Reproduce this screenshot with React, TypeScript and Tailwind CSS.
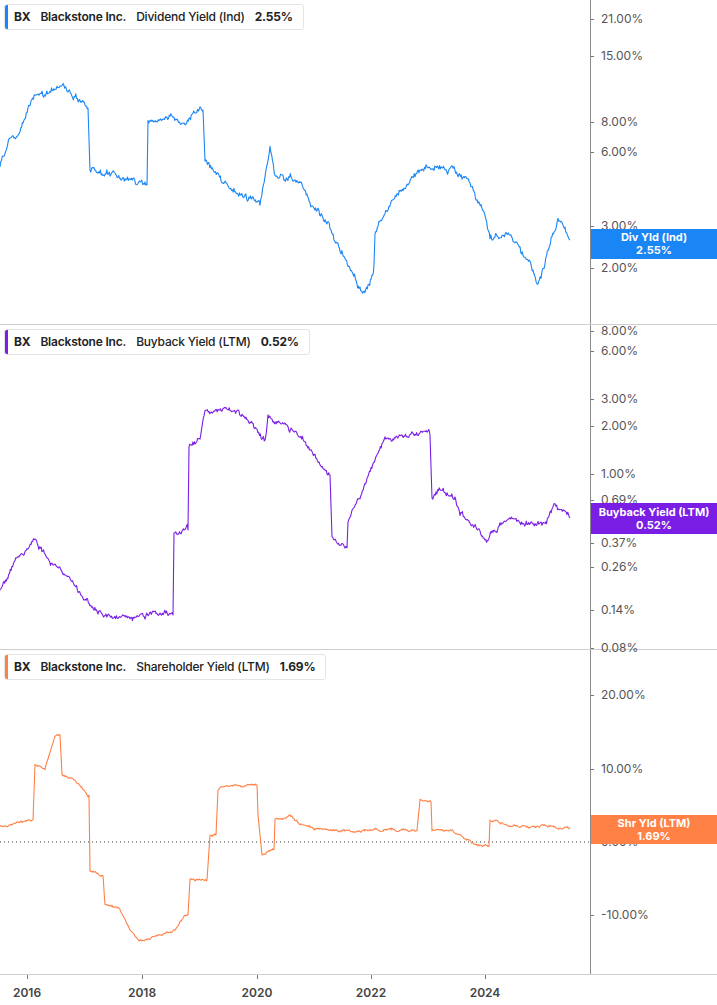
import React from 'react';

type Pt = [number, number];

// deterministic noisy line through keypoints
function noisy(keys: Pt[], amp: number, seed: number): string {
  let s = seed;
  const rnd = () => {
    s = (s * 9301 + 49297) % 233280;
    return s / 233280 - 0.5;
  };
  const out: string[] = [];
  let walk = 0;
  for (let i = 0; i < keys.length - 1; i++) {
    const [x0, y0] = keys[i];
    const [x1, y1] = keys[i + 1];
    const jump = Math.abs(y1 - y0) > 30 && x1 - x0 < 5;
    const steps = jump ? 1 : Math.max(1, Math.round((x1 - x0) / 0.8));
    for (let k = 0; k < steps; k++) {
      const t = k / steps;
      walk = walk * 0.85 + rnd() * amp;
      const y = y0 + (y1 - y0) * t + (jump ? 0 : walk + rnd() * amp * 0.8);
      out.push(`${(x0 + (x1 - x0) * t).toFixed(1)},${y.toFixed(1)}`);
    }
  }
  const l = keys[keys.length - 1];
  out.push(`${l[0]},${l[1]}`);
  return out.join(' ');
}

const divKeys: Pt[] = [[0,165],[10,140],[20,130],[35,90],[50,95],[60,85],[75,95],[85,105],[88,108],[90,170],[110,175],[145,185],[147,185],[148,120],[170,115],[185,125],[200,105],[203,110],[205,160],[230,190],[260,205],[265,180],[270,145],[275,175],[300,180],[310,200],[330,230],[345,260],[360,290],[365,295],[372,275],[374,265],[375,230],[385,210],[400,190],[415,175],[430,165],[450,170],[470,180],[485,215],[490,240],[510,235],[520,245],[530,265],[537,285],[545,265],[552,235],[558,220],[565,230],[570,240]];
const buyKeys: Pt[] = [[0,265],[15,235],[35,215],[45,230],[60,245],[75,265],[90,280],[110,290],[130,293],[160,287],[173,290],[174,210],[185,205],[188,205],[189,125],[200,115],[205,87],[230,85],[250,95],[265,115],[268,90],[285,100],[300,110],[315,130],[328,150],[330,150],[332,210],[345,220],[347,220],[348,195],[360,170],[375,135],[385,115],[400,110],[415,110],[428,110],[430,110],[432,175],[440,165],[455,175],[460,190],[480,205],[485,215],[500,200],[520,195],[535,200],[545,195],[555,180],[560,185],[570,193]];
const shrKeys: Pt[] = [[0,175],[30,170],[33,170],[35,115],[45,120],[55,85],[60,85],[62,125],[75,130],[88,145],[89,145],[90,220],[100,225],[103,225],[105,255],[120,260],[130,280],[140,290],[150,288],[175,280],[185,265],[188,265],[190,230],[205,230],[207,230],[210,185],[216,185],[218,140],[230,135],[245,135],[257,135],[258,165],[262,205],[272,200],[274,200],[275,170],[290,165],[300,175],[320,178],[340,180],[380,180],[415,180],[417,180],[420,150],[430,150],[431,150],[432,180],[450,180],[460,185],[475,195],[488,195],[489,195],[490,170],[510,175],[530,177],[550,175],[570,179]];

type Label = { t: string; y: number };

function Panel(props: {
  name: string; value: string; color: string; pts: string; labels: Label[];
  tag: string; tagY: number; tagH: number; zero?: number;
}) {
  return (
    <div className="flex h-[325px] border-b border-[#cfcfcf]">
      <div className="relative w-[590px] h-full">
        <svg width="590" height="325" className="absolute inset-0">
          {props.zero !== undefined && (
            <line x1="0" x2="590" y1={props.zero} y2={props.zero} stroke="#333" strokeWidth="1" strokeDasharray="1 3" />
          )}
          <polyline points={props.pts} fill="none" stroke={props.color} strokeWidth="1.1" strokeLinejoin="round" />
        </svg>
        <div className="absolute left-[4px] top-[4px] flex items-center gap-[10px] bg-white border border-[#e4e4e4] rounded-[3px] pl-[9px] pr-[10px] h-[26px] text-[12px] font-medium tracking-[-0.2px] text-[#222] overflow-hidden">
          <span className="absolute left-0 top-0 bottom-0 w-[3px]" style={{ background: props.color }} />
          <span className="font-bold">BX</span>
          <span className="font-semibold">Blackstone Inc.</span>
          <span>{props.name}</span>
          <span className="font-bold">{props.value}</span>
        </div>
      </div>
      <div className="relative flex-1 h-full border-l border-[#8a8a8a]">
        {props.labels.map((l) => (
          <div key={l.t} className="absolute left-0 flex items-center" style={{ top: l.y - 8 }}>
            <span className="w-[3px] h-px bg-[#777]" />
            <span className="ml-[7px] text-[12px] text-[#555] leading-4">{l.t}</span>
          </div>
        ))}
        <div
          className="absolute left-0 right-0 flex flex-col items-center justify-center text-white text-[11px] font-bold leading-[13px]"
          style={{ top: props.tagY, height: props.tagH, background: props.color }}
        >
          {props.tag.split('|').map((s) => <span key={s}>{s}</span>)}
        </div>
      </div>
    </div>
  );
}

export default function App() {
  return (
    <div className="w-[717px] h-[1005px] bg-white overflow-hidden" style={{ fontFamily: 'Inter, "Liberation Sans", sans-serif' }}>
      <Panel name="Dividend Yield (Ind)" value="2.55%" color="#1a86f5" pts={noisy(divKeys, 4, 11)}
        labels={[{t:'21.00%',y:19},{t:'15.00%',y:56},{t:'8.00%',y:122},{t:'6.00%',y:152},{t:'3.00%',y:226},{t:'2.00%',y:268}]}
        tag="Div Yld (Ind)|2.55%" tagY={229} tagH={30} />
      <Panel name="Buyback Yield (LTM)" value="0.52%" color="#7a1ee6" pts={noisy(buyKeys, 3.5, 23)}
        labels={[{t:'8.00%',y:6},{t:'6.00%',y:26},{t:'3.00%',y:74},{t:'2.00%',y:101},{t:'1.00%',y:149},{t:'0.69%',y:175},{t:'0.37%',y:218},{t:'0.26%',y:242},{t:'0.14%',y:285},{t:'0.08%',y:323}]}
        tag="Buyback Yield (LTM)|0.52%" tagY={178} tagH={31} />
      <Panel name="Shareholder Yield (LTM)" value="1.69%" color="#ff8145" pts={noisy(shrKeys, 1.5, 37)} zero={192}
        labels={[{t:'20.00%',y:45},{t:'10.00%',y:119},{t:'0.00%',y:192},{t:'-10.00%',y:265}]}
        tag="Shr Yld (LTM)|1.69%" tagY={165} tagH={29} />
      <div className="relative h-[30px] w-[590px] text-[12px] font-semibold text-[#444]">
        {[['2016',27],['2018',142],['2020',257],['2022',371],['2024',485]].map(([t, x]) => (
          <div key={t} className="absolute top-0 flex flex-col items-center w-[40px]" style={{ left: (x as number) - 20 }}>
            <span className="w-px h-[4px] bg-[#777]" />
            <span className="mt-[5px]">{t}</span>
          </div>
        ))}
      </div>
    </div>
  );
}
